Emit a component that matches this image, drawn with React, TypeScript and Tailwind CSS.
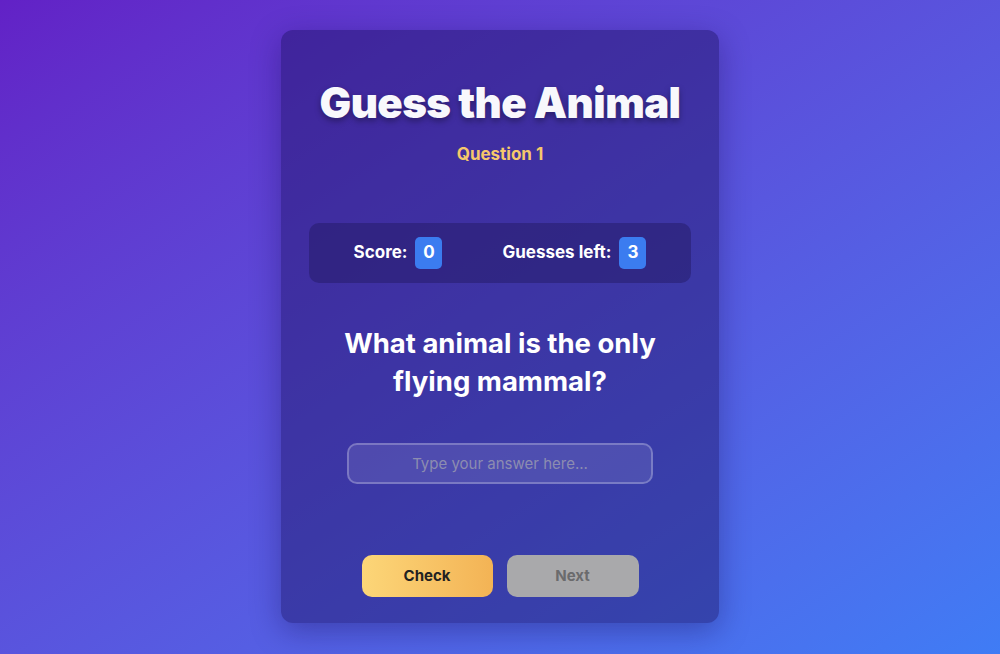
// Guess the Animal quiz card.
import { useState } from "react";

const font = { fontFamily: "Inter, 'Noto Sans', sans-serif" };

export default function App() {
  const [answer, setAnswer] = useState("");
  const score = 0;
  const guessesLeft = 3;

  return (
    <div
      className="flex h-[654px] w-full items-start justify-center bg-gradient-to-br from-[#6221c6] to-[#3f7cf5] pt-[30px]"
      style={font}
    >
      <div className="flex h-[593px] w-[438px] flex-col items-center rounded-xl bg-[#1a1060]/45 px-7 pt-[49px] shadow-[0_8px_30px_rgba(20,10,80,0.35)]">
        <h1 className="text-[42px] leading-[48px] font-black tracking-[-0.6px] text-[#f8f8fc] [text-shadow:0_3px_6px_rgba(0,0,0,0.35)]">
          Guess the Animal
        </h1>
        <div className="mt-[17px] text-[17px] leading-5 font-bold text-[#f6c86b]">Question 1</div>

        <div className="mt-[59px] flex h-[60px] w-full items-center justify-center gap-[60px] rounded-[10px] bg-[#231a66]/50">
          <div className="flex items-center gap-2 text-[17px] font-bold text-white">
            Score:
            <span className="flex h-8 w-[27px] items-center justify-center rounded-[5px] bg-[#3b7cf0] text-[17px]">
              {score}
            </span>
          </div>
          <div className="flex items-center gap-2 text-[17px] font-bold text-white">
            Guesses left:
            <span className="flex h-8 w-[27px] items-center justify-center rounded-[5px] bg-[#3b7cf0] text-[17px]">
              {guessesLeft}
            </span>
          </div>
        </div>

        <p className="mt-[41px] w-[350px] text-center text-[27.5px] leading-[38px] font-bold text-white">
          What animal is the only flying mammal?
        </p>

        <input
          value={answer}
          onChange={(e) => setAnswer(e.target.value)}
          placeholder="Type your answer here..."
          className="mt-[43px] h-[41px] w-[306px] rounded-[10px] border-2 border-white/25 bg-white/10 text-center text-[15px] text-white placeholder-[#8c8cb0] outline-none"
        />

        <div className="mt-[71px] flex gap-[14px]">
          <button className="h-[42px] w-[131px] rounded-[10px] bg-gradient-to-r from-[#fcd678] to-[#f3b355] text-[15px] font-bold text-[#222]">
            Check
          </button>
          <button disabled className="h-[42px] w-[132px] rounded-[10px] bg-[#a9a9ab] text-[15px] font-bold text-[#6b6b6d]">
            Next
          </button>
        </div>
      </div>
    </div>
  );
}
